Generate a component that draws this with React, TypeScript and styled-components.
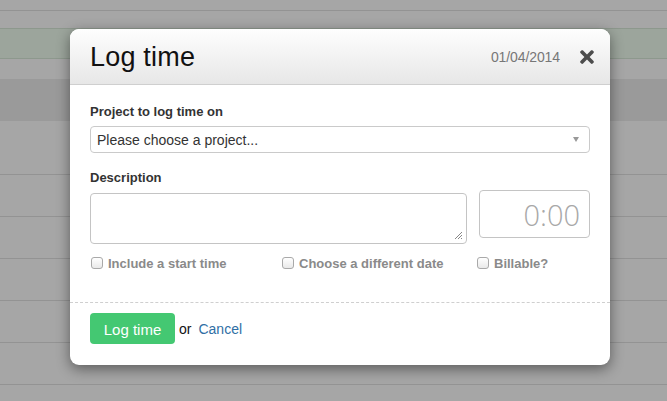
import React from "react";
import styled, { createGlobalStyle } from "styled-components";
import { FaTimes } from "react-icons/fa";

const Global = createGlobalStyle`
  html, body { margin: 0; padding: 0; }
  body {
    background: #a6a6a6;
    font-family: "Liberation Sans", Arial, Helvetica, sans-serif;
    overflow: hidden;
  }
`;

const Page = styled.div`
  position: relative;
  width: 667px;
  height: 401px;
  overflow: hidden;
`;

const Backdrop = styled.div`
  display: flex;
  flex-direction: column;
`;

type RowKind = "plain" | "green" | "dark";

const BgRow = styled.div<{ $h: number; $kind: RowKind; $line?: boolean; $lineColor?: string }>`
  height: ${(p) => p.$h}px;
  flex: none;
  background: ${(p) =>
    p.$kind === "green" ? "#9ca59c" : p.$kind === "dark" ? "#9a9a9a" : "#a6a6a6"};
  border-bottom: ${(p) => (p.$line ? `1px solid ${p.$lineColor || "#939393"}` : "none")};
`;

const Modal = styled.div`
  position: absolute;
  left: 70px;
  top: 29px;
  width: 540px;
  background: #fff;
  border-radius: 9px;
  box-shadow: 0 4px 14px rgba(0, 0, 0, 0.45);
  overflow: hidden;
`;

const Header = styled.div`
  height: 55px;
  border-bottom: 1px solid #cfcfcf;
  background: linear-gradient(#fefefe, #e7e7e7);
  display: flex;
  align-items: center;
  padding: 0 13px 0 20px;
`;

const Title = styled.h1`
  margin: 0;
  flex: 1;
  font-size: 27px;
  font-weight: normal;
  color: #111;
  letter-spacing: 0.2px;
  padding-top: 2px;
`;

const DateText = styled.span`
  font-size: 14px;
  color: #777;
  margin-right: 17px;
  padding-top: 1px;
  letter-spacing: -0.1px;
`;

const Close = styled.span`
  display: flex;
  color: #4d4d4d;
  font-size: 20px;
`;

const Body = styled.div`
  padding: 19px 20px 0;
`;

const Label = styled.div<{ $gap?: number }>`
  font-size: 13px;
  font-weight: bold;
  color: #333;
  line-height: 16px;
  margin-top: ${(p) => p.$gap || 0}px;
  margin-bottom: 6px;
`;

const Select = styled.div`
  height: 25px;
  border: 1px solid #cacaca;
  border-radius: 4px;
  display: flex;
  align-items: center;
  padding: 0 10px 0 6px;
  font-size: 14px;
  color: #333;
  justify-content: space-between;
`;

const Caret = styled.span`
  width: 0;
  height: 0;
  border-left: 3.5px solid transparent;
  border-right: 3.5px solid transparent;
  border-top: 5px solid #999;
`;

const InputRow = styled.div`
  display: flex;
  gap: 12px;
  align-items: flex-start;
`;

const TextArea = styled.div`
  position: relative;
  width: 375px;
  height: 49px;
  margin-top: 1px;
  border: 1px solid #c4c4c4;
  border-radius: 4px;
`;

const Grip = styled.svg`
  position: absolute;
  right: 3px;
  bottom: 3px;
`;

const TimeBox = styled.div`
  box-sizing: border-box;
  width: 111px;
  height: 48px;
  margin-top: -2px;
  border: 1px solid #c4c4c4;
  border-radius: 4px;
  display: flex;
  align-items: center;
  justify-content: flex-end;
  padding-right: 9px;
  font-family: "Open Sans", "Liberation Sans", sans-serif;
  font-weight: 300;
  font-size: 29px;
  color: #a8a8a8;
`;

const Checks = styled.div`
  display: flex;
  margin-top: 12px;
  height: 14px;
  align-items: center;
`;

const CheckItem = styled.label<{ $w?: number }>`
  display: flex;
  align-items: center;
  gap: 5px;
  width: ${(p) => (p.$w ? `${p.$w}px` : "auto")};
  font-size: 13px;
  font-weight: bold;
  color: #8a8a8a;
`;

const Box = styled.span`
  width: 10px;
  height: 10px;
  border: 1px solid #a9a9a9;
  border-radius: 3px;
  background: linear-gradient(#fff, #e9e9e9);
  margin-left: 1px;
`;

const Footer = styled.div`
  margin-top: 32px;
  border-top: 1px dashed #cfcfcf;
  padding: 10px 20px 21px;
  display: flex;
  align-items: center;
  gap: 4px;
`;

const Button = styled.button`
  height: 31px;
  width: 85px;
  border: none;
  border-radius: 4px;
  background: #44c872;
  color: #fff;
  font-family: "Liberation Sans", Arial, sans-serif;
  font-size: 15px;
  padding: 0;
  padding-top: 2px;
`;

const Or = styled.span`
  font-size: 14px;
  color: #111;
  margin-right: 3px;
`;

const Link = styled.a`
  font-size: 14px;
  color: #2f6fa5;
  text-decoration: none;
`;

const rows: { h: number; kind: RowKind; line?: boolean; lineColor?: string }[] = [
  { h: 10, kind: "plain", line: true },
  { h: 17, kind: "plain", line: true, lineColor: "#8d988d" },
  { h: 29, kind: "green", line: true, lineColor: "#8d988d" },
  { h: 20, kind: "plain" },
  { h: 42, kind: "dark" },
  { h: 53, kind: "plain", line: true },
  { h: 41, kind: "plain", line: true },
  { h: 41, kind: "plain", line: true },
  { h: 41, kind: "plain", line: true },
  { h: 41, kind: "plain", line: true },
  { h: 41, kind: "plain", line: true },
  { h: 16, kind: "plain" },
];

export default function App() {
  return (
    <Page>
      <Global />
      <Backdrop>
        {rows.map((r, i) => (
          <BgRow key={i} $h={r.h} $kind={r.kind} $line={r.line} $lineColor={r.lineColor} />
        ))}
      </Backdrop>
      <Modal>
        <Header>
          <Title>Log time</Title>
          <DateText>01/04/2014</DateText>
          <Close>
            <FaTimes />
          </Close>
        </Header>
        <Body>
          <Label>Project to log time on</Label>
          <Select>
            <span>Please choose a project...</span>
            <Caret />
          </Select>
          <Label $gap={17}>Description</Label>
          <InputRow>
            <TextArea>
              <Grip width="9" height="9" viewBox="0 0 9 9">
                <path d="M8 1 L1 8 M8 4 L4 8 M8 7 L7 8" stroke="#888" strokeWidth="1" />
              </Grip>
            </TextArea>
            <TimeBox>0:00</TimeBox>
          </InputRow>
          <Checks>
            <CheckItem $w={191}>
              <Box />
              Include a start time
            </CheckItem>
            <CheckItem $w={195}>
              <Box />
              Choose a different date
            </CheckItem>
            <CheckItem>
              <Box />
              Billable?
            </CheckItem>
          </Checks>
        </Body>
        <Footer>
          <Button>Log time</Button>
          <Or>or</Or>
          <Link href="#">Cancel</Link>
        </Footer>
      </Modal>
    </Page>
  );
}
